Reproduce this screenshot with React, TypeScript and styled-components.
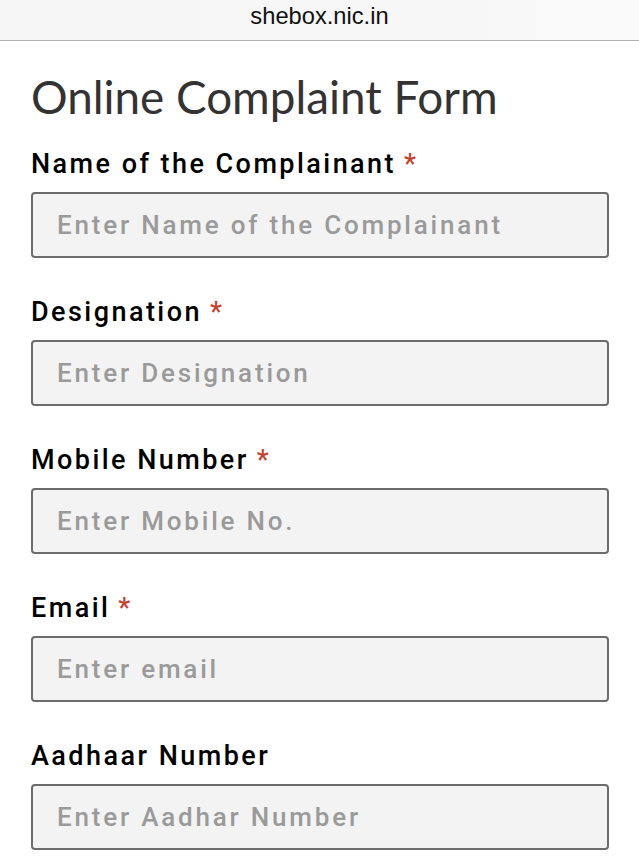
import React from "react";
import styled, { createGlobalStyle } from "styled-components";

const Global = createGlobalStyle`
  html, body { margin: 0; padding: 0; background: #ffffff; }
  * { box-sizing: border-box; }
`;

const Page = styled.div`
  width: 639px;
  height: 868px;
  overflow: hidden;
  background: #ffffff;
`;

const AddressBar = styled.div`
  height: 41px;
  background: linear-gradient(90deg, #f6f6f6 0%, #f7f7f7 70%, #fafafa 100%);
  border-bottom: 1px solid #b2b2b2;
  display: flex;
  align-items: center;
  justify-content: center;
  font-family: "Liberation Sans", Arial, sans-serif;
  font-size: 23.7px;
  color: #111;
  padding-bottom: 7px;
`;

const Content = styled.div`
  padding: 30px 30px 0 31px;
  display: flex;
  flex-direction: column;
`;

const Title = styled.h1`
  margin: 0 0 25px 0;
  font-family: "Lato", "Open Sans", sans-serif;
  font-weight: 400;
  font-size: 45.8px;
  line-height: 52px;
  color: #333;
`;

const Field = styled.div`
  display: flex;
  flex-direction: column;
  gap: 12px;
  margin-bottom: 38px;
`;

const Label = styled.label`
  font-family: Roboto, "Noto Sans", sans-serif;
  font-weight: 500;
  font-size: 27px;
  line-height: 32px;
  letter-spacing: 2.45px;
  color: #000;
`;

const Star = styled.span`
  color: #c9412f;
  margin-left: 8px;
`;

const Input = styled.input`
  width: 578px;
  height: 66px;
  border: 2px solid #6c6c6c;
  border-radius: 4px;
  background: #f3f3f3;
  padding: 0 24px;
  font-family: Roboto, "Noto Sans", sans-serif;
  font-weight: 500;
  font-size: 26px;
  letter-spacing: 2.8px;
  color: #333;
  outline: none;
  &::placeholder {
    color: #9a9a9a;
  }
`;

const fields = [
  { label: "Name of the Complainant", ph: "Enter Name of the Complainant", req: true },
  { label: "Designation", ph: "Enter Designation", req: true },
  { label: "Mobile Number", ph: "Enter Mobile No.", req: true },
  { label: "Email", ph: "Enter email", req: true },
  { label: "Aadhaar Number", ph: "Enter Aadhar Number", req: false },
];

export default function App() {
  return (
    <Page>
      <Global />
      <AddressBar>shebox.nic.in</AddressBar>
      <Content>
        <Title>Online Complaint Form</Title>
        {fields.map((f) => (
          <Field key={f.label}>
            <Label>
              {f.label}
              {f.req && <Star>*</Star>}
            </Label>
            <Input placeholder={f.ph} />
          </Field>
        ))}
      </Content>
    </Page>
  );
}
